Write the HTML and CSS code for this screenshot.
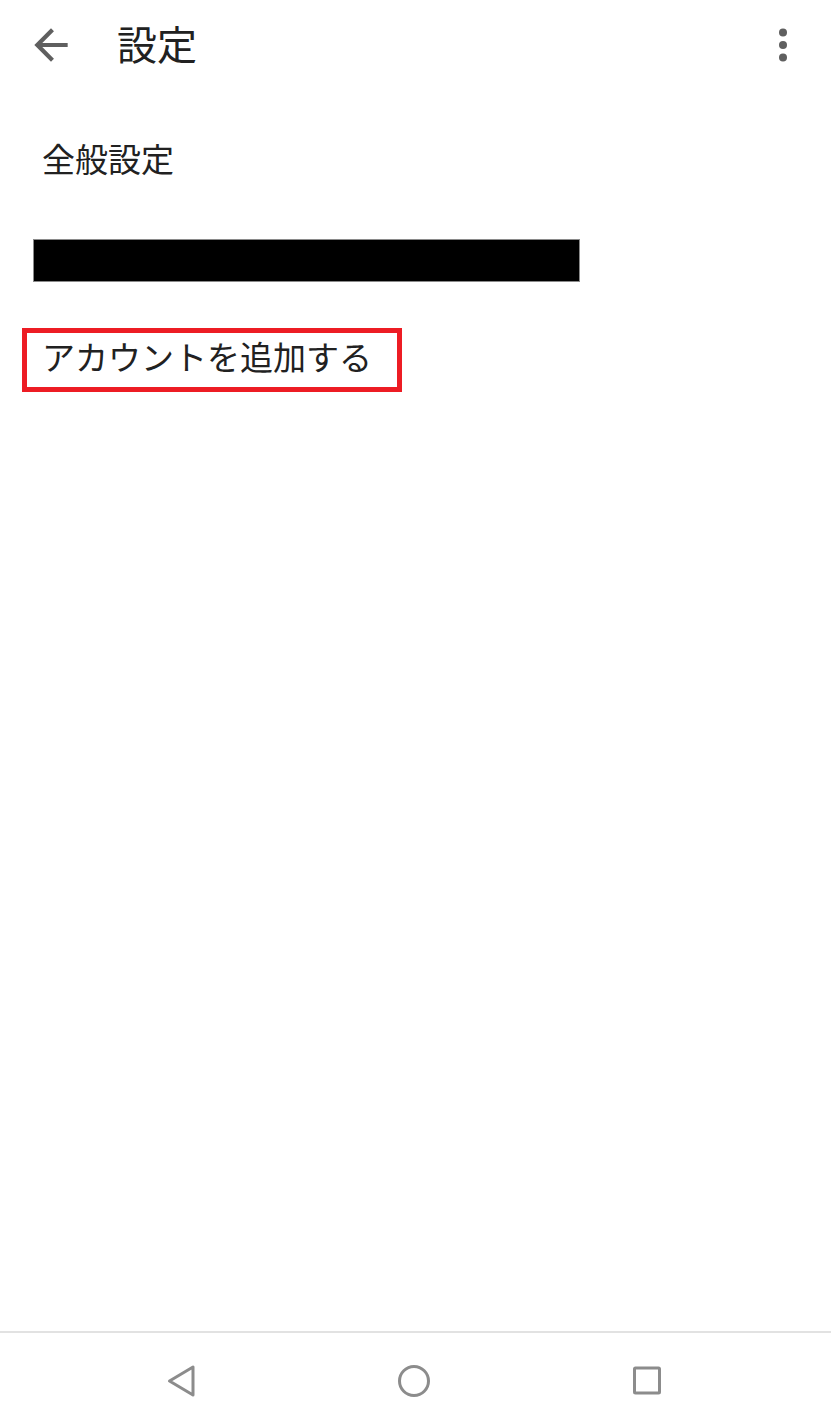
FILE: index.html
```html
<!DOCTYPE html>
<html lang="ja">
<head>
<meta charset="utf-8">
<title>設定</title>
<link rel="stylesheet" href="styles.css">
</head>
<body>
<div class="screen">
  <header class="appbar">
    <svg class="back-icon" viewBox="0 0 24 24" width="50" height="50" aria-hidden="true">
      <path d="M20 11H7.83l5.59-5.59L12 4l-8 8 8 8 1.41-1.41L7.83 13H20v-2z" fill="#5f5f5f"/>
    </svg>
    <h1 class="title">設定</h1>
    <svg class="more-icon" viewBox="0 0 20 50" width="20" height="50" aria-hidden="true">
      <circle cx="10" cy="12.5" r="4" fill="#5f5f5f"/>
      <circle cx="10" cy="25" r="4" fill="#5f5f5f"/>
      <circle cx="10" cy="37.5" r="4" fill="#5f5f5f"/>
    </svg>
  </header>

  <main class="settings-list">
    <div class="item item-general">全般設定</div>
    <div class="redacted"></div>
    <div class="item add-account">アカウントを追加する</div>
  </main>

  <nav class="navbar">
    <svg class="nav-icon" viewBox="0 0 40 40" width="40" height="40" aria-hidden="true">
      <path d="M8.5 20 L32 6 L32 34 Z" fill="none" stroke="#8c8c8c" stroke-width="3" stroke-linejoin="round"/>
    </svg>
    <svg class="nav-icon" viewBox="0 0 40 40" width="40" height="40" aria-hidden="true">
      <circle cx="20" cy="20" r="14.5" fill="none" stroke="#8c8c8c" stroke-width="3"/>
    </svg>
    <svg class="nav-icon" viewBox="0 0 40 40" width="40" height="40" aria-hidden="true">
      <rect x="7.5" y="7" width="25" height="25" rx="1" fill="none" stroke="#8c8c8c" stroke-width="3"/>
    </svg>
  </nav>
</div>
</body>
</html>
```

FILE: styles.css
```css
* {
  box-sizing: border-box;
}

html, body {
  margin: 0;
  padding: 0;
  background: #ffffff;
}

body {
  font-family: "Noto Sans CJK JP", "Noto Sans", sans-serif;
  color: #212121;
}

.screen {
  display: flex;
  flex-direction: column;
  width: 831px;
  height: 1428px;
}

.appbar {
  display: flex;
  align-items: center;
  height: 89px;
  padding-left: 26px;
  padding-right: 38px;
}

.back-icon {
  flex: none;
  display: block;
}

.title {
  margin: 0 0 0 41px;
  font-size: 40px;
  font-weight: 400;
  line-height: 48px;
  color: #212121;
  flex: 1;
  position: relative;
  top: -2px;
}

.more-icon {
  flex: none;
  display: block;
}

.settings-list {
  flex: 1;
  display: flex;
  flex-direction: column;
  align-items: flex-start;
  padding-top: 49px;
}

.item {
  font-size: 33px;
  line-height: 40px;
  color: #212121;
}

.item-general {
  margin-left: 42px;
}

.redacted {
  margin-top: 61px;
  margin-left: 33px;
  width: 547px;
  height: 43px;
  background: #000000;
  border: 1px solid #8a8a8a;
}

.add-account {
  margin-top: 46px;
  margin-left: 22px;
  border: 5px solid #ed1c24;
  padding: 3px 25px 11px 15px;
}

.navbar {
  flex: none;
  height: 97px;
  border-top: 2px solid #e2e2e2;
  display: flex;
  align-items: center;
  justify-content: center;
  gap: 193px;
  padding-right: 3px;
}

.nav-icon {
  display: block;
}
```
